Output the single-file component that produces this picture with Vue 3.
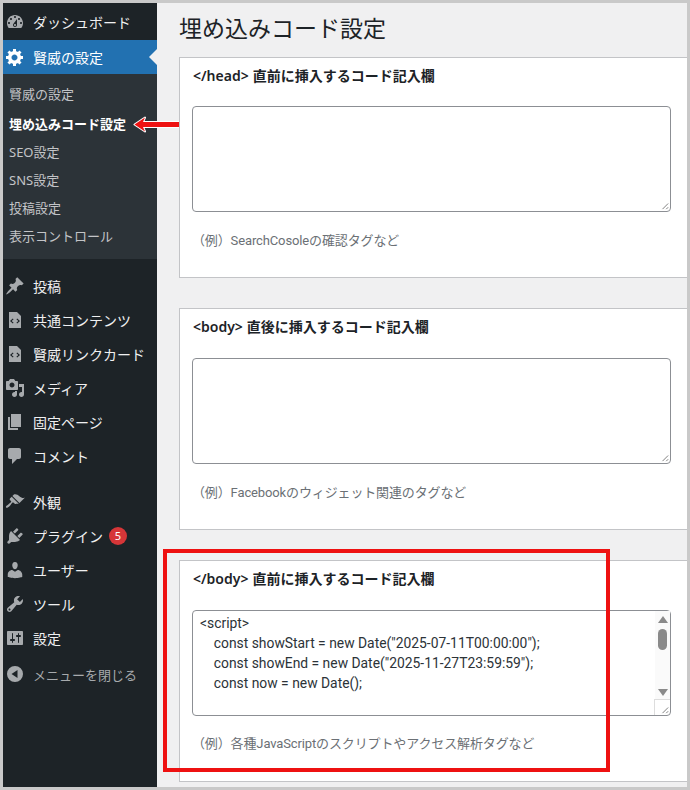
<script setup>
const icons = {
  dash: 'M3.76 16h12.48c1.1-1.37 1.76-3.11 1.76-5 0-4.42-3.58-8-8-8s-8 3.58-8 8c0 1.89.66 3.63 1.76 5zM10 4c.55 0 1 .45 1 1s-.45 1-1 1-1-.45-1-1 .45-1 1-1zM6 6c.55 0 1 .45 1 1s-.45 1-1 1-1-.45-1-1 .45-1 1-1zm8 0c.55 0 1 .45 1 1s-.45 1-1 1-1-.45-1-1 .45-1 1-1zm-5.37 5.55L12 7v6c0 1.1-.9 2-2 2s-2-.9-2-2c0-.57.24-1.08.63-1.45zM4 10c.55 0 1 .45 1 1s-.45 1-1 1-1-.45-1-1 .45-1 1-1zm12 0c.55 0 1 .45 1 1s-.45 1-1 1-1-.45-1-1 .45-1 1-1zm-5 3c0-.55-.45-1-1-1s-1 .45-1 1 .45 1 1 1 1-.45 1-1z',
  gear: 'M18 12h-2.18c-.17.7-.44 1.35-.81 1.93l1.54 1.54-2.1 2.1-1.54-1.54c-.58.36-1.23.63-1.91.79V19H8v-2.18c-.68-.16-1.33-.43-1.91-.79l-1.54 1.54-2.12-2.12 1.54-1.54c-.36-.58-.63-1.23-.79-1.91H1V9.03h2.17c.16-.7.44-1.35.8-1.94L2.43 5.55l2.1-2.1 1.54 1.54c.58-.37 1.24-.64 1.93-.81V2h3v2.18c.68.16 1.33.43 1.91.79l1.54-1.54 2.12 2.12-1.54 1.54c.36.59.64 1.24.8 1.94H18V12zm-8.5 1.5c1.66 0 3-1.34 3-3s-1.34-3-3-3-3 1.34-3 3 1.34 3 3 3z',
  pin: 'M10.44 3.02l1.82-1.82 6.36 6.35-1.83 1.82c-1.05-.68-2.48-.57-3.41.36l-.75.75c-.92.93-1.04 2.35-.35 3.41l-1.83 1.82-2.41-2.41-2.8 2.79c-.42.42-3.38 2.71-3.8 2.29s1.86-3.39 2.28-3.81l2.79-2.79L4.1 9.36l1.83-1.82c1.05.69 2.48.57 3.4-.36l.75-.75c.93-.92 1.05-2.35.36-3.41z',
  code: 'M4 2h8l4 4v12H4V2zM8.6 9.2l-.8-.8L5 11l2.8 2.6.8-.8L6.7 11zM11.4 12.8l.8.8L15 11l-2.8-2.6-.8.8L13.3 11z',
  media: 'M13 11V4c0-.55-.45-1-1-1h-1.67L9 1H5L3.67 3H2c-.55 0-1 .45-1 1v7c0 .55.45 1 1 1h10c.55 0 1-.45 1-1zM7 4.5c1.38 0 2.5 1.12 2.5 2.5S8.38 9.5 7 9.5 4.5 8.38 4.5 7 5.62 4.5 7 4.5zM14 6h5v10.5c0 1.38-1.12 2.5-2.5 2.5S14 17.88 14 16.5s1.12-2.5 2.5-2.5c.17 0 .34.02.5.05V9h-3V6zm-4 8.05V13h2v3.5c0 1.38-1.12 2.5-2.5 2.5S7 17.88 7 16.5 8.12 14 9.5 14c.17 0 .34.02.5.05z',
  page: 'M6 15V2h10v13H6zm-1 1h8v2H3V5h2v11z',
  comment: 'M5 2h9c1.1 0 2 .9 2 2v7c0 1.1-.9 2-2 2h-2l-5 5v-5H5c-1.1 0-2-.9-2-2V4c0-1.1.9-2 2-2z',
  brush: 'M14.48 11.06L7.41 3.99l1.5-1.5c.5-.56 2.3-.47 3.51.32 1.21.8 1.43 1.28 2.91 2.1 1.18.64 2.45 1.26 4.45.85zm-.71.71L6.7 4.7 4.93 6.47c-.39.39-.39 1.02 0 1.41l1.06 1.06c.39.39.39 1.03 0 1.42-.6.6-1.43 1.11-2.21 1.69-.35.26-.7.53-1.01.84C1.43 13.23.4 14.85 1.1 15.6c.7.76 2.29-.33 3.63-1.67.3-.31.58-.67.84-1.01.58-.78 1.09-1.61 1.69-2.21.39-.39 1.03-.39 1.42 0l1.06 1.06c.39.39 1.02.39 1.41 0z',
  plug: 'M13.11 4.36L9.87 7.6 8 5.73l3.24-3.24c.35-.34 1.05-.2 1.56.32.52.51.66 1.21.31 1.55zm-8 1.77l.91-1.12 9.01 9.01-1.19.84c-.71.71-2.63 1.16-3.82 1.16H6.14L4.9 17.26c-.59.59-1.54.59-2.12 0-.59-.58-.59-1.53 0-2.12l1.24-1.24v-3.88c0-1.13.4-3.19 1.09-3.89zm7.26 3.97l3.24-3.24c.34-.35 1.04-.21 1.55.31.52.51.66 1.21.31 1.55l-3.24 3.25z',
  user: 'M10 9.25c-2.27 0-2.73-3.44-2.73-3.44C7 4.02 7.82 2 9.97 2c2.16 0 2.98 2.02 2.71 3.81 0 0-.41 3.44-2.68 3.44zm0 2.57L12.72 10c2.39 0 4.52 2.33 4.52 4.53v2.49s-3.65 1.13-7.24 1.13c-3.65 0-7.24-1.13-7.24-1.13v-2.49c0-2.25 1.94-4.48 4.47-4.48z',
  tool: 'M16.68 9.77c-1.34 1.34-3.3 1.67-4.95.99l-5.41 6.52c-.99.99-2.59.99-3.58 0s-.99-2.59 0-3.57l6.52-5.42c-.68-1.65-.35-3.61.99-4.95 1.28-1.28 3.12-1.62 4.72-1.06l-2.89 2.89 2.82 2.82 2.86-2.87c.53 1.58.18 3.39-1.08 4.65zM3.81 16.21c.4.39 1.04.39 1.43 0 .4-.4.4-1.04 0-1.43-.39-.4-1.03-.4-1.43 0-.39.39-.39 1.03 0 1.43z',
  set: 'M18 16V4c0-.55-.45-1-1-1H3c-.55 0-1 .45-1 1v12c0 .55.45 1 1 1h14c.55 0 1-.45 1-1zM8 11h1c.55 0 1 .45 1 1s-.45 1-1 1H8v1.5c0 .28-.22.5-.5.5s-.5-.22-.5-.5V13H6c-.55 0-1-.45-1-1s.45-1 1-1h1V5.5c0-.28.22-.5.5-.5s.5.22.5.5V11zm5-2h-1c-.55 0-1-.45-1-1s.45-1 1-1h1V5.5c0-.28.22-.5.5-.5s.5.22.5.5V7h1c.55 0 1 .45 1 1s-.45 1-1 1h-1v5.5c0 .28-.22.5-.5.5s-.5-.22-.5-.5V9z',
  close: 'M10 2a8 8 0 1 0 0 16 8 8 0 0 0 0-16zM12.5 6v8L6.5 10z'
}
const subs = ['賢威の設定', '埋め込みコード設定', 'SEO設定', 'SNS設定', '投稿設定', '表示コントロール']
const groupA = [
  ['pin', '投稿'], ['code', '共通コンテンツ'], ['code', '賢威リンクカード'],
  ['media', 'メディア'], ['page', '固定ページ'], ['comment', 'コメント']
]
const groupB = [
  ['brush', '外観'], ['plug', 'プラグイン', 5], ['user', 'ユーザー'], ['tool', 'ツール'], ['set', '設定']
]
const cards = [
  { tag: '</head>', name: '直前に挿入するコード記入欄', note: '（例）SearchCosoleの確認タグなど' },
  { tag: '<body>', name: '直後に挿入するコード記入欄', note: '（例）Facebookのウィジェット関連のタグなど' },
  {
    tag: '</body>', name: '直前に挿入するコード記入欄', note: '（例）各種JavaScriptのスクリプトやアクセス解析タグなど',
    code: '<script>\n    const showStart = new Date("2025-07-11T00:00:00");\n    const showEnd = new Date("2025-11-27T23:59:59");\n    const now = new Date();'
  }
]
</script>

<template>
  <div class="frame">
    <aside class="side">
      <div class="row first">
        <svg class="ico" viewBox="0 0 20 20"><path :d="icons.dash" /></svg>
        <span>ダッシュボード</span>
      </div>
      <div class="row current">
        <svg class="ico" viewBox="0 0 20 20"><path :d="icons.gear" /></svg>
        <span>賢威の設定</span>
        <i class="notch"></i>
      </div>
      <ul class="sub">
        <li v-for="(s, i) in subs" :key="s" :class="{ on: i === 1 }">{{ s }}</li>
      </ul>
      <div class="group">
        <div v-for="it in groupA" :key="it[1]" class="row">
          <svg class="ico" viewBox="0 0 20 20"><path fill-rule="evenodd" :d="icons[it[0]]" /></svg>
          <span>{{ it[1] }}</span>
        </div>
      </div>
      <div class="group">
        <div v-for="it in groupB" :key="it[1]" class="row">
          <svg class="ico" viewBox="0 0 20 20"><path fill-rule="evenodd" :d="icons[it[0]]" /></svg>
          <span>{{ it[1] }}</span>
          <b v-if="it[2]" class="badge">{{ it[2] }}</b>
        </div>
      </div>
      <div class="row collapse">
        <svg class="ico" viewBox="0 0 20 20"><path fill-rule="evenodd" :d="icons.close" /></svg>
        <span>メニューを閉じる</span>
      </div>
    </aside>
    <main class="main">
      <h1>埋め込みコード設定</h1>
      <section v-for="c in cards" :key="c.tag" class="card">
        <h2><span class="tag">{{ c.tag }}</span>{{ c.name }}</h2>
        <div class="area">
          <pre v-if="c.code">{{ c.code }}</pre>
          <div v-if="c.code" class="bar">
            <i class="up"></i><i class="thumb"></i><i class="down"></i>
          </div>
          <svg class="grip" :class="{ boxed: c.code }" viewBox="0 0 16 16">
            <path d="M8 14 14 8M12 14 14 12" stroke="#777" stroke-width="1" fill="none" />
          </svg>
        </div>
        <p :class="{ tight: c.code }">{{ c.note }}</p>
      </section>
    </main>
    <svg class="arrow" viewBox="0 0 46 19" width="46" height="19">
      <path d="M1.5 9.5 12 2.5 10 7H46V12H10L12 16.5Z" fill="#ee1111" stroke="#fff" stroke-width="2" stroke-linejoin="round" paint-order="stroke" />
    </svg>
    <div class="mark"></div>
  </div>
</template>

<style>
html, body { margin: 0; background: #f0f0f1; }
</style>

<style scoped>
.frame {
  position: relative;
  box-sizing: border-box;
  width: 690px;
  height: 790px;
  border: 3px solid #c9c9c9;
  display: flex;
  overflow: hidden;
  background: #f0f0f1;
  font-family: "Noto Sans", "Noto Sans CJK JP", sans-serif;
}
.side {
  width: 154px;
  flex: none;
  background: #1d2327;
  color: #f0f0f1;
  padding-top: 2px;
}
.row {
  height: 34px;
  display: flex;
  align-items: center;
  font-size: 14px;
  position: relative;
  white-space: nowrap;
}
.row span { margin-left: 8px; }
.first { height: 35px; padding-bottom: 1px; box-sizing: border-box; }
.ico {
  width: 20px;
  height: 20px;
  margin-left: 2px;
  fill: #a7aaad;
  flex: none;
}
.current {
  background: #2271b1;
  color: #fff;
}
.current .ico { fill: #fff; }
.notch {
  position: absolute;
  right: 0;
  top: 9px;
  border: 8px solid transparent;
  border-right-color: #f0f0f1;
  border-left-width: 0;
}
.sub {
  list-style: none;
  margin: 0;
  padding: 7px 0 9px;
  background: #2c3338;
  color: #c3c4c7;
  font-size: 13px;
}
.sub li {
  height: 28px;
  line-height: 28px;
  padding-left: 6px;
}
.sub li:first-child { height: 29px; line-height: 27px; }
.sub .on { color: #fff; font-weight: 700; }
.group { margin-top: 10px; }
.group + .group { margin-top: 12px; }
.badge {
  margin-left: 6px;
  width: 18px;
  height: 18px;
  border-radius: 50%;
  background: #d63638;
  color: #fff;
  font-size: 11px;
  font-weight: 400;
  line-height: 18px;
  text-align: center;
}
.collapse { margin-top: 2px; color: #a7aaad; font-size: 13px; }
.main {
  flex: 1;
  min-width: 0;
  padding-left: 22px;
}
h1 {
  margin: 0;
  height: 54px;
  line-height: 50px;
  font-size: 23px;
  font-weight: 400;
  color: #1d2327;
}
.card {
  box-sizing: border-box;
  height: 222px;
  margin-bottom: 30px;
  margin-right: -2px;
  background: #fff;
  border: 1px solid #c3c4c7;
  padding: 0 12px;
}
.card:first-of-type { height: 221px; }
h2 {
  margin: 0 0 0 1px;
  height: 49px;
  line-height: 36px;
  font-size: 14px;
  font-weight: 700;
  color: #1d2327;
  white-space: pre;
}
.card:first-of-type h2 { height: 48px; }
.tag { font-weight: 600; margin-right: 4px; }
.area {
  position: relative;
  box-sizing: border-box;
  width: 479px;
  height: 106px;
  border: 1px solid #8c8f94;
  border-radius: 4px;
  background: #fff;
}
pre {
  margin: 0;
  padding: 2px 7px;
  font: 13.87px/20px Roboto, "Noto Sans CJK JP", sans-serif;
  color: #2c3338;
}
.bar {
  position: absolute;
  right: 0;
  top: 0;
  bottom: 16px;
  width: 15px;
  background: #fafafa;
  display: flex;
  flex-direction: column;
  align-items: center;
}
.up, .down {
  width: 0;
  height: 0;
  border: 5px solid transparent;
}
.up { border-bottom: 7px solid #8a8a8a; border-top-width: 0; margin-top: 5px; }
.thumb { width: 9px; height: 21px; border-radius: 5px; background: #8a8a8a; margin-top: 6px; }
.down { border-top: 7px solid #8a8a8a; border-bottom-width: 0; margin-top: auto; margin-bottom: 3px; }
.grip {
  position: absolute;
  right: 0;
  bottom: 0;
  width: 15px;
  height: 15px;
}
.grip.boxed { border-left: 1px solid #ddd; border-top: 1px solid #ddd; }
p {
  margin: 19px 0 0;
  font: 13px/20px Roboto, "Noto Sans CJK JP", sans-serif;
  letter-spacing: -0.13px;
  color: #6b7075;
}
p.tight { margin-top: 18px; }
.arrow {
  position: absolute;
  left: 130px;
  top: 112px;
}
.mark {
  position: absolute;
  left: 160px;
  top: 546px;
  width: 447px;
  height: 223px;
  box-sizing: border-box;
  border: 4px solid #ee1111;
}
</style>
